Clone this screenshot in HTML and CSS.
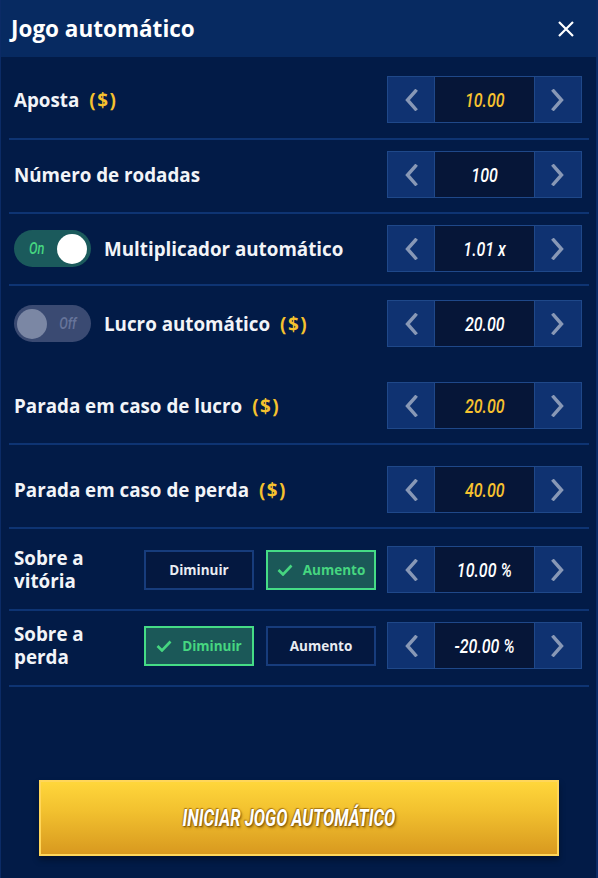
FILE: index.html
```html
<!DOCTYPE html>
<html lang="pt">
<head>
<meta charset="utf-8">
<title>Jogo automático</title>
<link rel="stylesheet" href="styles.css">
</head>
<body>
<div class="panel">
  <header class="head">
    <h1 class="title">Jogo automático</h1>
    <button class="close" aria-label="Fechar">
      <svg width="16" height="16" viewBox="0 0 16 16"><path d="M1 1 L15 15 M15 1 L1 15" stroke="#fff" stroke-width="2.2" fill="none"/></svg>
    </button>
  </header>

  <div class="rows">
    <div class="row r1">
      <div class="label">Aposta <span class="cur">($)</span></div>
      <div class="stepper">
        <button class="arrow"><svg width="14" height="22" viewBox="0 0 14 22"><path d="M11.5 2 L3.5 11 L11.5 20" /></svg></button>
        <div class="value yellow"><span>10.00</span></div>
        <button class="arrow"><svg width="14" height="22" viewBox="0 0 14 22"><path d="M2.5 2 L10.5 11 L2.5 20" /></svg></button>
      </div>
    </div>

    <div class="row r2">
      <div class="label">Número de rodadas</div>
      <div class="stepper">
        <button class="arrow"><svg width="14" height="22" viewBox="0 0 14 22"><path d="M11.5 2 L3.5 11 L11.5 20" /></svg></button>
        <div class="value"><span>100</span></div>
        <button class="arrow"><svg width="14" height="22" viewBox="0 0 14 22"><path d="M2.5 2 L10.5 11 L2.5 20" /></svg></button>
      </div>
    </div>

    <div class="row r3">
      <div class="label">
        <span class="toggle on"><span class="tg-text">On</span><span class="knob"></span></span>
        Multiplicador automático
      </div>
      <div class="stepper">
        <button class="arrow"><svg width="14" height="22" viewBox="0 0 14 22"><path d="M11.5 2 L3.5 11 L11.5 20" /></svg></button>
        <div class="value"><span>1.01 x</span></div>
        <button class="arrow"><svg width="14" height="22" viewBox="0 0 14 22"><path d="M2.5 2 L10.5 11 L2.5 20" /></svg></button>
      </div>
    </div>

    <div class="row r4">
      <div class="label">
        <span class="toggle off"><span class="knob"></span><span class="tg-text">Off</span></span>
        Lucro automático <span class="cur">($)</span>
      </div>
      <div class="stepper">
        <button class="arrow"><svg width="14" height="22" viewBox="0 0 14 22"><path d="M11.5 2 L3.5 11 L11.5 20" /></svg></button>
        <div class="value"><span>20.00</span></div>
        <button class="arrow"><svg width="14" height="22" viewBox="0 0 14 22"><path d="M2.5 2 L10.5 11 L2.5 20" /></svg></button>
      </div>
    </div>

    <div class="row r5">
      <div class="label">Parada em caso de lucro <span class="cur">($)</span></div>
      <div class="stepper">
        <button class="arrow"><svg width="14" height="22" viewBox="0 0 14 22"><path d="M11.5 2 L3.5 11 L11.5 20" /></svg></button>
        <div class="value yellow"><span>20.00</span></div>
        <button class="arrow"><svg width="14" height="22" viewBox="0 0 14 22"><path d="M2.5 2 L10.5 11 L2.5 20" /></svg></button>
      </div>
    </div>

    <div class="row r6">
      <div class="label">Parada em caso de perda <span class="cur">($)</span></div>
      <div class="stepper">
        <button class="arrow"><svg width="14" height="22" viewBox="0 0 14 22"><path d="M11.5 2 L3.5 11 L11.5 20" /></svg></button>
        <div class="value yellow"><span>40.00</span></div>
        <button class="arrow"><svg width="14" height="22" viewBox="0 0 14 22"><path d="M2.5 2 L10.5 11 L2.5 20" /></svg></button>
      </div>
    </div>

    <div class="row r7">
      <div class="label two">Sobre a<br>vitória</div>
      <div class="choices">
        <button class="choice">Diminuir</button>
        <button class="choice sel"><svg width="16" height="12" viewBox="0 0 16 12"><path d="M1.5 6 L6 10.5 L14.5 1.5"/></svg>Aumento</button>
      </div>
      <div class="stepper">
        <button class="arrow"><svg width="14" height="22" viewBox="0 0 14 22"><path d="M11.5 2 L3.5 11 L11.5 20" /></svg></button>
        <div class="value"><span>10.00 %</span></div>
        <button class="arrow"><svg width="14" height="22" viewBox="0 0 14 22"><path d="M2.5 2 L10.5 11 L2.5 20" /></svg></button>
      </div>
    </div>

    <div class="row r8">
      <div class="label two">Sobre a<br>perda</div>
      <div class="choices">
        <button class="choice sel"><svg width="16" height="12" viewBox="0 0 16 12"><path d="M1.5 6 L6 10.5 L14.5 1.5"/></svg>Diminuir</button>
        <button class="choice">Aumento</button>
      </div>
      <div class="stepper">
        <button class="arrow"><svg width="14" height="22" viewBox="0 0 14 22"><path d="M11.5 2 L3.5 11 L11.5 20" /></svg></button>
        <div class="value"><span>-20.00 %</span></div>
        <button class="arrow"><svg width="14" height="22" viewBox="0 0 14 22"><path d="M2.5 2 L10.5 11 L2.5 20" /></svg></button>
      </div>
    </div>
  </div>

  <div class="footer">
    <button class="start"><span>INICIAR JOGO AUTOMÁTICO</span></button>
  </div>
</div>
</body>
</html>
```

FILE: styles.css
```css
* { box-sizing: border-box; }

html, body {
  margin: 0;
  padding: 0;
  background: #021b47;
}

body {
  font-family: "Open Sans", Lato, sans-serif;
  color: #f2f4f8;
}

.panel {
  width: 598px;
  height: 878px;
  background: #021b47;
  border-left: 1px solid #0b2b66;
  border-right: 2px solid #0b2b66;
  display: flex;
  flex-direction: column;
}

.head {
  height: 57px;
  background: #072a61;
  display: flex;
  align-items: center;
  justify-content: space-between;
  padding: 0 22px 0 10px;
}

.title {
  margin: 0;
  font-size: 22.5px;
  font-weight: 700;
  color: #fff;
  letter-spacing: 0;
}

.close {
  background: none;
  border: 0;
  padding: 0;
  width: 16px;
  height: 16px;
  display: flex;
}

.rows {
  padding: 0 7px 0 8px;
}

.row {
  display: flex;
  align-items: center;
  justify-content: space-between;
  padding-left: 5px;
  padding-right: 7px;
  border-bottom: 2px solid #0e3473;
}

.r1 { padding-top: 19px; padding-bottom: 15px; }
.r2 { padding-top: 11px; padding-bottom: 14px; }
.r3 { padding-top: 11px; padding-bottom: 12px; }
.r4 { padding-top: 14px; padding-bottom: 35px; border-bottom: 0; }
.r5 { padding-top: 0; padding-bottom: 14px; }
.r6 { padding-top: 21px; padding-bottom: 14px; }
.r7 { padding-top: 17px; padding-bottom: 16px; justify-content: flex-start; }
.r8 { padding-top: 11px; padding-bottom: 16px; justify-content: flex-start; }

.label {
  display: flex;
  align-items: center;
  font-size: 18.8px;
  font-weight: 700;
  color: #f2f4f8;
  white-space: nowrap;
}

.label.two {
  display: block;
  width: 130px;
  line-height: 23px;
  white-space: normal;
}

.cur {
  color: #f5c12e;
  margin-left: 10px;
  letter-spacing: 1.5px;
}

.toggle {
  width: 77px;
  height: 37px;
  border-radius: 19px;
  display: flex;
  align-items: center;
  padding: 0 4px 0 0;
  margin-right: 13px;
}

.toggle.on {
  background: #1b5a5c;
  justify-content: flex-end;
}

.toggle.off {
  background: #3a4a72;
  padding: 0 0 0 3px;
}

.knob {
  width: 30px;
  height: 30px;
  border-radius: 50%;
}

.on .knob { background: #fff; }
.off .knob { background: #7b87a4; }

.tg-text {
  font-family: Roboto, sans-serif;
  font-style: italic;
  font-weight: 500;
  font-size: 16px;
  display: inline-block;
  transform: scaleX(0.8);
}

.on .tg-text {
  color: #46d680;
  margin-right: 11px;
}

.off .tg-text {
  color: #66749a;
  margin-left: 10px;
}

.stepper {
  display: flex;
  height: 47px;
  width: 195px;
  flex: none;
}

.arrow {
  width: 48px;
  height: 47px;
  background: #0f3271;
  border: 1px solid #1f4889;
  padding: 0;
  display: flex;
  align-items: center;
  justify-content: center;
}

.arrow path {
  fill: none;
  stroke: #8898b6;
  stroke-width: 3.4;
  stroke-linecap: square;
}

.value {
  flex: 1;
  background: #061638;
  border-top: 1px solid #1f4889;
  border-bottom: 1px solid #1f4889;
  display: flex;
  align-items: center;
  justify-content: center;
  font-family: Roboto, sans-serif;
  font-style: italic;
  font-weight: 500;
  font-size: 20px;
  color: #fff;
}

.value span {
  display: inline-block;
  transform: scaleX(0.8);
  white-space: nowrap;
}

.value.yellow { color: #f7c22f; }

.choices {
  display: flex;
  gap: 12px;
  margin-right: 11px;
}

.choice {
  width: 110px;
  height: 40px;
  border: 2px solid #173c7c;
  background: #041840;
  color: #e9ecf2;
  font-family: "Open Sans", sans-serif;
  font-weight: 700;
  font-size: 13.5px;
  display: flex;
  align-items: center;
  justify-content: center;
  gap: 10px;
  padding: 0;
}

.choice.sel {
  border-color: #45dc86;
  background: #1b5858;
  color: #46d680;
}

.choice svg path {
  fill: none;
  stroke: #46d680;
  stroke-width: 2.6;
}

.footer {
  flex: 1;
  display: flex;
  align-items: flex-end;
  justify-content: center;
  padding-bottom: 22px;
}

.start {
  width: 520px;
  height: 76px;
  border: 2px solid #ffd65a;
  background: linear-gradient(#ffd63b, #f2c12f 40%, #d8991f);
  box-shadow: 0 4px 6px rgba(0, 0, 0, 0.35);
  display: flex;
  align-items: center;
  justify-content: center;
  padding: 0 20px 0 0;
}

.start span {
  display: inline-block;
  font-family: Roboto, sans-serif;
  font-style: italic;
  font-weight: 700;
  font-size: 24px;
  color: #fff;
  transform: scaleX(0.7);
  white-space: nowrap;
  text-shadow: 0 0 2px #9a6b0c, 1px 1px 1px #8a5e08, -1px -1px 1px #b07c12, 2px 2px 3px rgba(120, 80, 0, 0.6);
}
```
